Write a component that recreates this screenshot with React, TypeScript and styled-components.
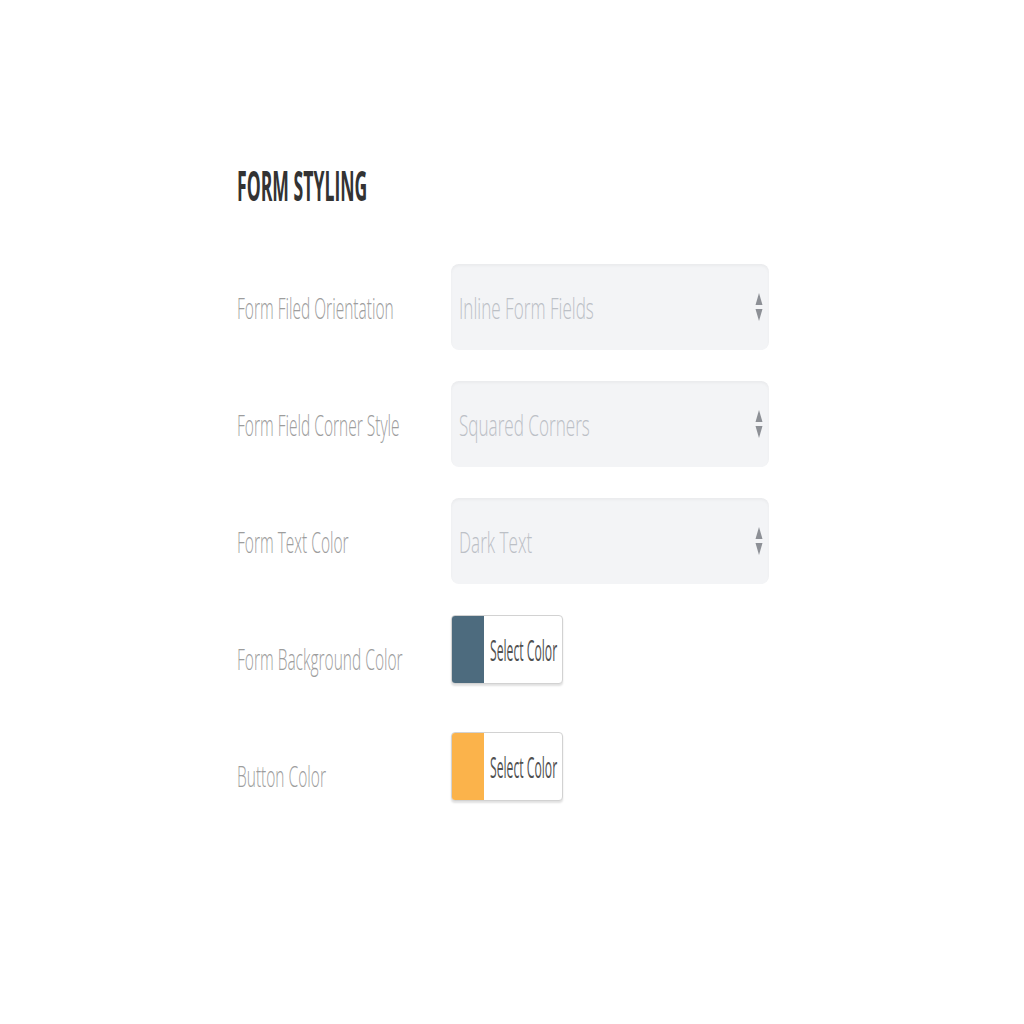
import styled, { createGlobalStyle } from "styled-components";

const GlobalStyle = createGlobalStyle`
  html, body {
    margin: 0;
    padding: 0;
    background: #ffffff;
  }
  body {
    font-family: "Open Sans", "Liberation Sans", sans-serif;
  }
`;

type Field = {
  label: string;
  value: string;
};

const selectFields: Field[] = [
  { label: "Form Filed Orientation", value: "Inline Form Fields" },
  { label: "Form Field Corner Style", value: "Squared Corners" },
  { label: "Form Text Color", value: "Dark Text" },
];

const colorFields = [
  { label: "Form Background Color", color: "#4d6b7e" },
  { label: "Button Color", color: "#fbb34b" },
];

const SelectArrows = () => (
  <svg width="8" height="30" viewBox="0 0 8 30" aria-hidden="true">
    <path d="M4 1 L7.5 13 L0.5 13 Z" fill="#8d9096" />
    <path d="M4 29 L7.5 17 L0.5 17 Z" fill="#8d9096" />
  </svg>
);

const App = () => {
  return (
    <>
      <GlobalStyle />
      <Page>
        <Title>
          <Squeeze $scale={0.43}>FORM STYLING</Squeeze>
        </Title>
        <Rows>
          {selectFields.map((field) => (
            <Row key={field.label}>
              <Label>
                <Squeeze $scale={0.535}>{field.label}</Squeeze>
              </Label>
              <SelectBox role="button">
                <SelectText>
                  <Squeeze $scale={0.59}>{field.value}</Squeeze>
                </SelectText>
                <SelectArrows />
              </SelectBox>
            </Row>
          ))}
          {colorFields.map((field) => (
            <Row key={field.label}>
              <Label>
                <Squeeze $scale={0.535}>{field.label}</Squeeze>
              </Label>
              <ColorButton type="button">
                <Swatch $color={field.color} />
                <ColorText>
                  <Squeeze $scale={0.42}>Select Color</Squeeze>
                </ColorText>
              </ColorButton>
            </Row>
          ))}
        </Rows>
      </Page>
    </>
  );
};

const Page = styled.main`
  width: 1024px;
  height: 1024px;
  box-sizing: border-box;
  padding: 157px 0 0 237px;
`;

const Squeeze = styled.span<{ $scale: number }>`
  display: inline-block;
  white-space: nowrap;
  transform: scaleX(${({ $scale }) => $scale});
  transform-origin: left center;
`;

const Title = styled.h2`
  margin: 0;
  height: 107px;
  font-size: 41px;
  line-height: 56px;
  font-weight: 700;
  color: #333333;
  letter-spacing: 0;
`;

const Rows = styled.div`
  display: flex;
  flex-direction: column;
  gap: 31px;
`;

const Row = styled.div`
  display: grid;
  grid-template-columns: 214px 318px;
  height: 86px;
  align-items: start;
`;

const Label = styled.div`
  height: 86px;
  display: flex;
  align-items: center;
  font-size: 29px;
  font-weight: 300;
  color: #9d9d9d;
  overflow: visible;
`;

const SelectBox = styled.div`
  height: 86px;
  box-sizing: border-box;
  display: flex;
  align-items: center;
  justify-content: space-between;
  padding: 0 6px 0 8px;
  background: #f3f4f6;
  border-radius: 8px;
  box-shadow: inset 0 2px 3px rgba(0, 0, 0, 0.04);
`;

const SelectText = styled.span`
  flex: 1;
  font-size: 29px;
  font-weight: 300;
  color: #bcc0c6;
  overflow: visible;
`;

const ColorButton = styled.button`
  display: flex;
  align-items: stretch;
  width: 112px;
  height: 69px;
  padding: 0;
  border: 1px solid #d2d2d2;
  border-radius: 4px;
  background: #ffffff;
  box-shadow: 0 2px 2px rgba(0, 0, 0, 0.12);
  overflow: hidden;
  cursor: pointer;
  font-family: inherit;
`;

const Swatch = styled.span<{ $color: string }>`
  width: 32px;
  flex: none;
  background: ${({ $color }) => $color};
`;

const ColorText = styled.span`
  flex: 1;
  display: flex;
  align-items: center;
  padding-left: 6px;
  font-size: 29px;
  font-weight: 400;
  color: #505050;
`;

export default App;
